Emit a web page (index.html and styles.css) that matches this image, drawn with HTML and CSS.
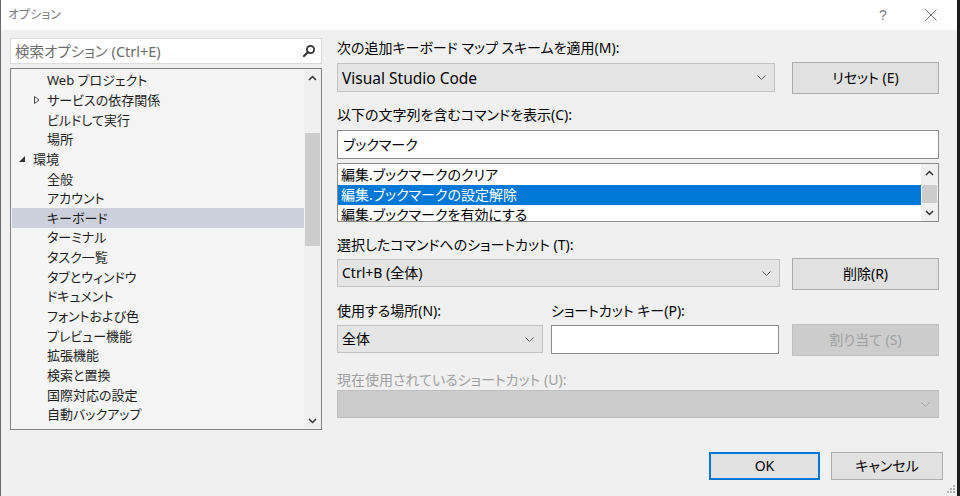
FILE: index.html
```html
<!DOCTYPE html>
<html lang="ja">
<head>
<meta charset="utf-8">
<title>オプション</title>
<link rel="stylesheet" href="styles.css">
</head>
<body>
<div class="window">
  <div class="titlebar">
    <span class="title">オプション</span>
    <span class="tb-btn help">?</span>
    <span class="tb-btn close"><svg width="12" height="12" viewBox="0 0 12 12"><path d="M0.5 0.5L11.5 11.5M11.5 0.5L0.5 11.5" stroke="#707070" stroke-width="1" fill="none"/></svg></span>
  </div>
  <div class="content">
    <div class="left">
      <div class="search">
        <span class="placeholder">検索オプション (Ctrl+E)</span>
        <svg class="search-icon" width="14" height="14" viewBox="0 0 14 14"><circle cx="8.5" cy="5.5" r="3.6" stroke="#333" stroke-width="1.8" fill="none"/><path d="M6 8L2 12" stroke="#333" stroke-width="2.2" stroke-linecap="round"/></svg>
      </div>
      <div class="tree">
        <ul class="tree-list">
          <li class="node l2"><span class="exp"></span><span class="lbl">Web プロジェクト</span></li>
          <li class="node l2"><span class="exp"><svg width="6" height="8" viewBox="0 0 6 8"><path d="M0.5 0.5L5 4L0.5 7.5Z" fill="none" stroke="#444" stroke-width="1"/></svg></span><span class="lbl">サービスの依存関係</span></li>
          <li class="node l2"><span class="exp"></span><span class="lbl">ビルドして実行</span></li>
          <li class="node l2"><span class="exp"></span><span class="lbl">場所</span></li>
          <li class="node l1"><span class="exp"><svg width="6" height="6" viewBox="0 0 6 6"><path d="M6 0L6 6L0 6Z" fill="#333"/></svg></span><span class="lbl">環境</span></li>
          <li class="node l2"><span class="exp"></span><span class="lbl">全般</span></li>
          <li class="node l2"><span class="exp"></span><span class="lbl">アカウント</span></li>
          <li class="node l2 selected"><span class="exp"></span><span class="lbl">キーボード</span></li>
          <li class="node l2"><span class="exp"></span><span class="lbl">ターミナル</span></li>
          <li class="node l2"><span class="exp"></span><span class="lbl">タスク一覧</span></li>
          <li class="node l2"><span class="exp"></span><span class="lbl">タブとウィンドウ</span></li>
          <li class="node l2"><span class="exp"></span><span class="lbl">ドキュメント</span></li>
          <li class="node l2"><span class="exp"></span><span class="lbl">フォントおよび色</span></li>
          <li class="node l2"><span class="exp"></span><span class="lbl">プレビュー機能</span></li>
          <li class="node l2"><span class="exp"></span><span class="lbl">拡張機能</span></li>
          <li class="node l2"><span class="exp"></span><span class="lbl">検索と置換</span></li>
          <li class="node l2"><span class="exp"></span><span class="lbl">国際対応の設定</span></li>
          <li class="node l2"><span class="exp"></span><span class="lbl">自動バックアップ</span></li>
        </ul>
        <div class="vscroll tree-scroll">
          <span class="sb-arrow"><svg width="9" height="6" viewBox="0 0 9 6"><path d="M1 5L4.5 1.5L8 5" stroke="#333" stroke-width="1.5" fill="none"/></svg></span>
          <div class="sb-track"><div class="sb-thumb tree-thumb"></div></div>
          <span class="sb-arrow"><svg width="9" height="6" viewBox="0 0 9 6"><path d="M1 1L4.5 4.5L8 1" stroke="#333" stroke-width="1.5" fill="none"/></svg></span>
        </div>
      </div>
    </div>

    <div class="right">
      <div class="label lbl-m">次の追加キーボード マップ スキームを適用(M):</div>
      <div class="row row-1">
        <div class="combo combo-scheme"><span class="combo-text latin">Visual Studio Code</span><svg class="chev" width="9" height="5" viewBox="0 0 9 5"><path d="M0.5 0.5L4.5 4.5L8.5 0.5" stroke="#606060" stroke-width="1" fill="none"/></svg></div>
        <div class="btn btn-side">リセット (E)</div>
      </div>

      <div class="label lbl-c">以下の文字列を含むコマンドを表示(C):</div>
      <div class="textbox textbox-wide">ブックマーク</div>
      <div class="listbox">
        <ul class="list-items">
          <li class="litem">編集.ブックマークのクリア</li>
          <li class="litem active">編集.ブックマークの設定解除</li>
          <li class="litem">編集.ブックマークを有効にする</li>
        </ul>
        <div class="vscroll list-scroll">
          <span class="sb-arrow"><svg width="9" height="6" viewBox="0 0 9 6"><path d="M1 5L4.5 1.5L8 5" stroke="#333" stroke-width="1.5" fill="none"/></svg></span>
          <div class="sb-track"><div class="sb-thumb list-thumb"></div></div>
          <span class="sb-arrow"><svg width="9" height="6" viewBox="0 0 9 6"><path d="M1 1L4.5 4.5L8 1" stroke="#333" stroke-width="1.5" fill="none"/></svg></span>
        </div>
      </div>

      <div class="label lbl-t">選択したコマンドへのショートカット (T):</div>
      <div class="row row-3">
        <div class="combo combo-shortcut"><span class="combo-text">Ctrl+B (全体)</span><svg class="chev" width="9" height="5" viewBox="0 0 9 5"><path d="M0.5 0.5L4.5 4.5L8.5 0.5" stroke="#606060" stroke-width="1" fill="none"/></svg></div>
        <div class="btn btn-side">削除(R)</div>
      </div>

      <div class="row label-row">
        <div class="label lbl-n">使用する場所(N):</div>
        <div class="label lbl-p">ショートカット キー(P):</div>
      </div>
      <div class="row row-4">
        <div class="combo combo-scope"><span class="combo-text">全体</span><svg class="chev" width="9" height="5" viewBox="0 0 9 5"><path d="M0.5 0.5L4.5 4.5L8.5 0.5" stroke="#606060" stroke-width="1" fill="none"/></svg></div>
        <div class="textbox textbox-key"></div>
        <div class="btn btn-side btn-disabled">割り当て (S)</div>
      </div>

      <div class="label label-disabled lbl-u">現在使用されているショートカット (U):</div>
      <div class="combo combo-disabled"><span class="combo-text"></span><svg class="chev" width="9" height="5" viewBox="0 0 9 5"><path d="M0.5 0.5L4.5 4.5L8.5 0.5" stroke="#a8a8a8" stroke-width="1" fill="none"/></svg></div>
    </div>
  </div>

  <div class="footer">
    <div class="btn btn-foot btn-default">OK</div>
    <div class="btn btn-foot">キャンセル</div>
  </div>
  <svg class="grip" width="9" height="9" viewBox="0 0 9 9"><rect x="7" y="1" width="2" height="2" fill="#b5b5b5"/><rect x="4" y="4" width="2" height="2" fill="#b5b5b5"/><rect x="7" y="4" width="2" height="2" fill="#b5b5b5"/><rect x="1" y="7" width="2" height="2" fill="#b5b5b5"/><rect x="4" y="7" width="2" height="2" fill="#b5b5b5"/><rect x="7" y="7" width="2" height="2" fill="#b5b5b5"/></svg>
</div>
</body>
</html>
```

FILE: styles.css
```css
* { box-sizing: border-box; }

html, body {
  margin: 0;
  padding: 0;
}

body {
  width: 960px;
  height: 496px;
  overflow: hidden;
  background: #f0f0f0;
  font-family: "Noto Sans", "Noto Sans CJK JP", sans-serif;
  font-feature-settings: "palt";
  color: #000;
}

.window {
  position: relative;
  width: 960px;
  height: 496px;
  display: flex;
  flex-direction: column;
  background: #f0f0f0;
  border-left: 1px solid #6a6a6a;
  border-right: 3px solid #1c1c1c;
}

/* Title bar */
.titlebar {
  height: 30px;
  flex: none;
  background: #fff;
  display: flex;
  align-items: center;
  padding-left: 7px;
}
.title {
  font-size: 12px;
  line-height: 16px;
  color: #7a7a7a;
  flex: 1;
}
.tb-btn {
  display: flex;
  align-items: center;
  justify-content: center;
  color: #7a7a7a;
}
.help {
  font-size: 14px;
  line-height: 16px;
  width: 12px;
  margin-right: 36px;
  font-family: "Liberation Sans", sans-serif;
}
.close {
  width: 12px;
  height: 12px;
  margin-right: 20px;
}

/* Content */
.content {
  height: 400px;
  flex: none;
  display: flex;
  padding-left: 9px;
  gap: 15px;
}

.left {
  width: 312px;
  padding-top: 8px;
  display: flex;
  flex-direction: column;
}

.search {
  height: 26px;
  background: #fff;
  border: 1px solid #dcdcdc;
  display: flex;
  align-items: center;
  padding-left: 4px;
  padding-right: 5px;
}
.placeholder {
  flex: 1;
  font-size: 14.5px;
  line-height: 18px;
  color: #6d6d6d;
}
.search-icon { display: block; }

.tree {
  margin-top: 4px;
  height: 362px;
  border: 1px solid #828282;
  background: #f5f5f5;
  display: flex;
}
.tree-list {
  list-style: none;
  margin: 0;
  padding: 1.5px 0 0 1px;
  flex: 1;
  overflow: hidden;
}
.node {
  height: 19.65px;
  display: flex;
  align-items: center;
  font-size: 13px;
  line-height: 16px;
  color: #1e1e1e;
  white-space: nowrap;
}
.node.selected { background: #ccd0dc; }
.node .exp {
  width: 16px;
  flex: none;
  display: flex;
  align-items: center;
}
.node.l1 { padding-left: 5px; }
.node.l1 .exp { padding-left: 2px; }
.node.l2 { padding-left: 19px; }
.node.l2 .exp { padding-left: 3px; }

.vscroll {
  width: 17px;
  flex: none;
  display: flex;
  flex-direction: column;
  background: #f0f0f0;
}
.sb-arrow {
  height: 17px;
  flex: none;
  display: flex;
  align-items: center;
  justify-content: center;
}
.sb-track { flex: 1; }
.sb-thumb {
  background: #cdcdcd;
  margin: 0 1px;
}
.tree-thumb { margin-top: 47px; height: 113px; }
.list-thumb { margin-top: 4px; height: 18px; }

/* Right column */
.right {
  width: 602px;
  padding-top: 8px;
  display: flex;
  flex-direction: column;
  align-items: flex-start;
}
.right > * { flex: none; }

.label {
  font-size: 14px;
  line-height: 20px;
  height: 20px;
  white-space: nowrap;
  color: #000;
}
.label-disabled { color: #a0a0a0; }

.row {
  display: flex;
  align-items: flex-start;
  width: 602px;
}

.combo {
  height: 29px;
  background: #e5e5e5;
  border: 1px solid #c2c2c2;
  display: flex;
  align-items: center;
  padding: 0 8px 0 4px;
}
.combo-text {
  flex: 1;
  font-size: 14px;
  line-height: 18px;
  white-space: nowrap;
}
.combo-text.latin { font-size: 15.5px; }
.chev { display: block; flex: none; }

.btn {
  background: #e1e1e1;
  border: 1px solid #adadad;
  display: flex;
  align-items: center;
  justify-content: center;
  font-size: 14px;
  line-height: 18px;
  white-space: nowrap;
}
.btn-side {
  width: 147px;
  height: 32px;
  margin-left: auto;
}
.btn-disabled {
  background: #cccccc;
  border-color: #bfbfbf;
  color: #a0a0a0;
}

.row-1 { margin-top: 4px; }
.combo-scheme { width: 438px; margin-top: 1px; }

.lbl-c { margin-top: 11px; }
.textbox {
  background: #fff;
  border: 1px solid #8c8c8c;
  font-size: 14px;
  line-height: 18px;
  display: flex;
  align-items: center;
  padding-left: 5px;
}
.textbox-wide {
  width: 602px;
  height: 29px;
  margin-top: 5px;
}

.listbox {
  width: 602px;
  height: 59px;
  margin-top: 4px;
  border: 1px solid #8c8c8c;
  background: #fff;
  display: flex;
}
.list-items {
  list-style: none;
  margin: 0;
  padding: 1px 0 0 0;
  flex: 1;
  overflow: hidden;
}
.litem {
  height: 20px;
  font-size: 14px;
  line-height: 20px;
  padding-left: 3px;
  white-space: nowrap;
}
.litem.active {
  background: #0078d7;
  color: #fff;
}
.list-scroll { background: #f0f0f0; }

.lbl-t { margin-top: 13px; }
.row-3 { margin-top: 3px; }
.combo-shortcut { width: 443px; margin-top: 1px; height: 28px; }

.label-row { margin-top: 11px; }
.lbl-n { width: 214px; }

.row-4 { margin-top: 3px; }
.combo-scope { width: 206px; height: 28px; margin-top: 1px; }
.textbox-key {
  width: 228px;
  height: 29px;
  margin-top: 1px;
  margin-left: 8px;
}

.lbl-u { margin-top: 14px; }
.combo-disabled {
  width: 602px;
  height: 28px;
  background: #cccccc;
  border-color: #bfbfbf;
}

/* Footer */
.footer {
  flex: none;
  margin-top: 22px;
  display: flex;
  justify-content: flex-end;
  gap: 11px;
  padding-right: 14px;
}
.btn-foot {
  width: 112px;
  height: 28px;
}
.btn-default {
  width: 111px;
  border: 2px solid #0078d7;
}

.grip {
  position: absolute;
  right: 2px;
  bottom: 3px;
}
```
